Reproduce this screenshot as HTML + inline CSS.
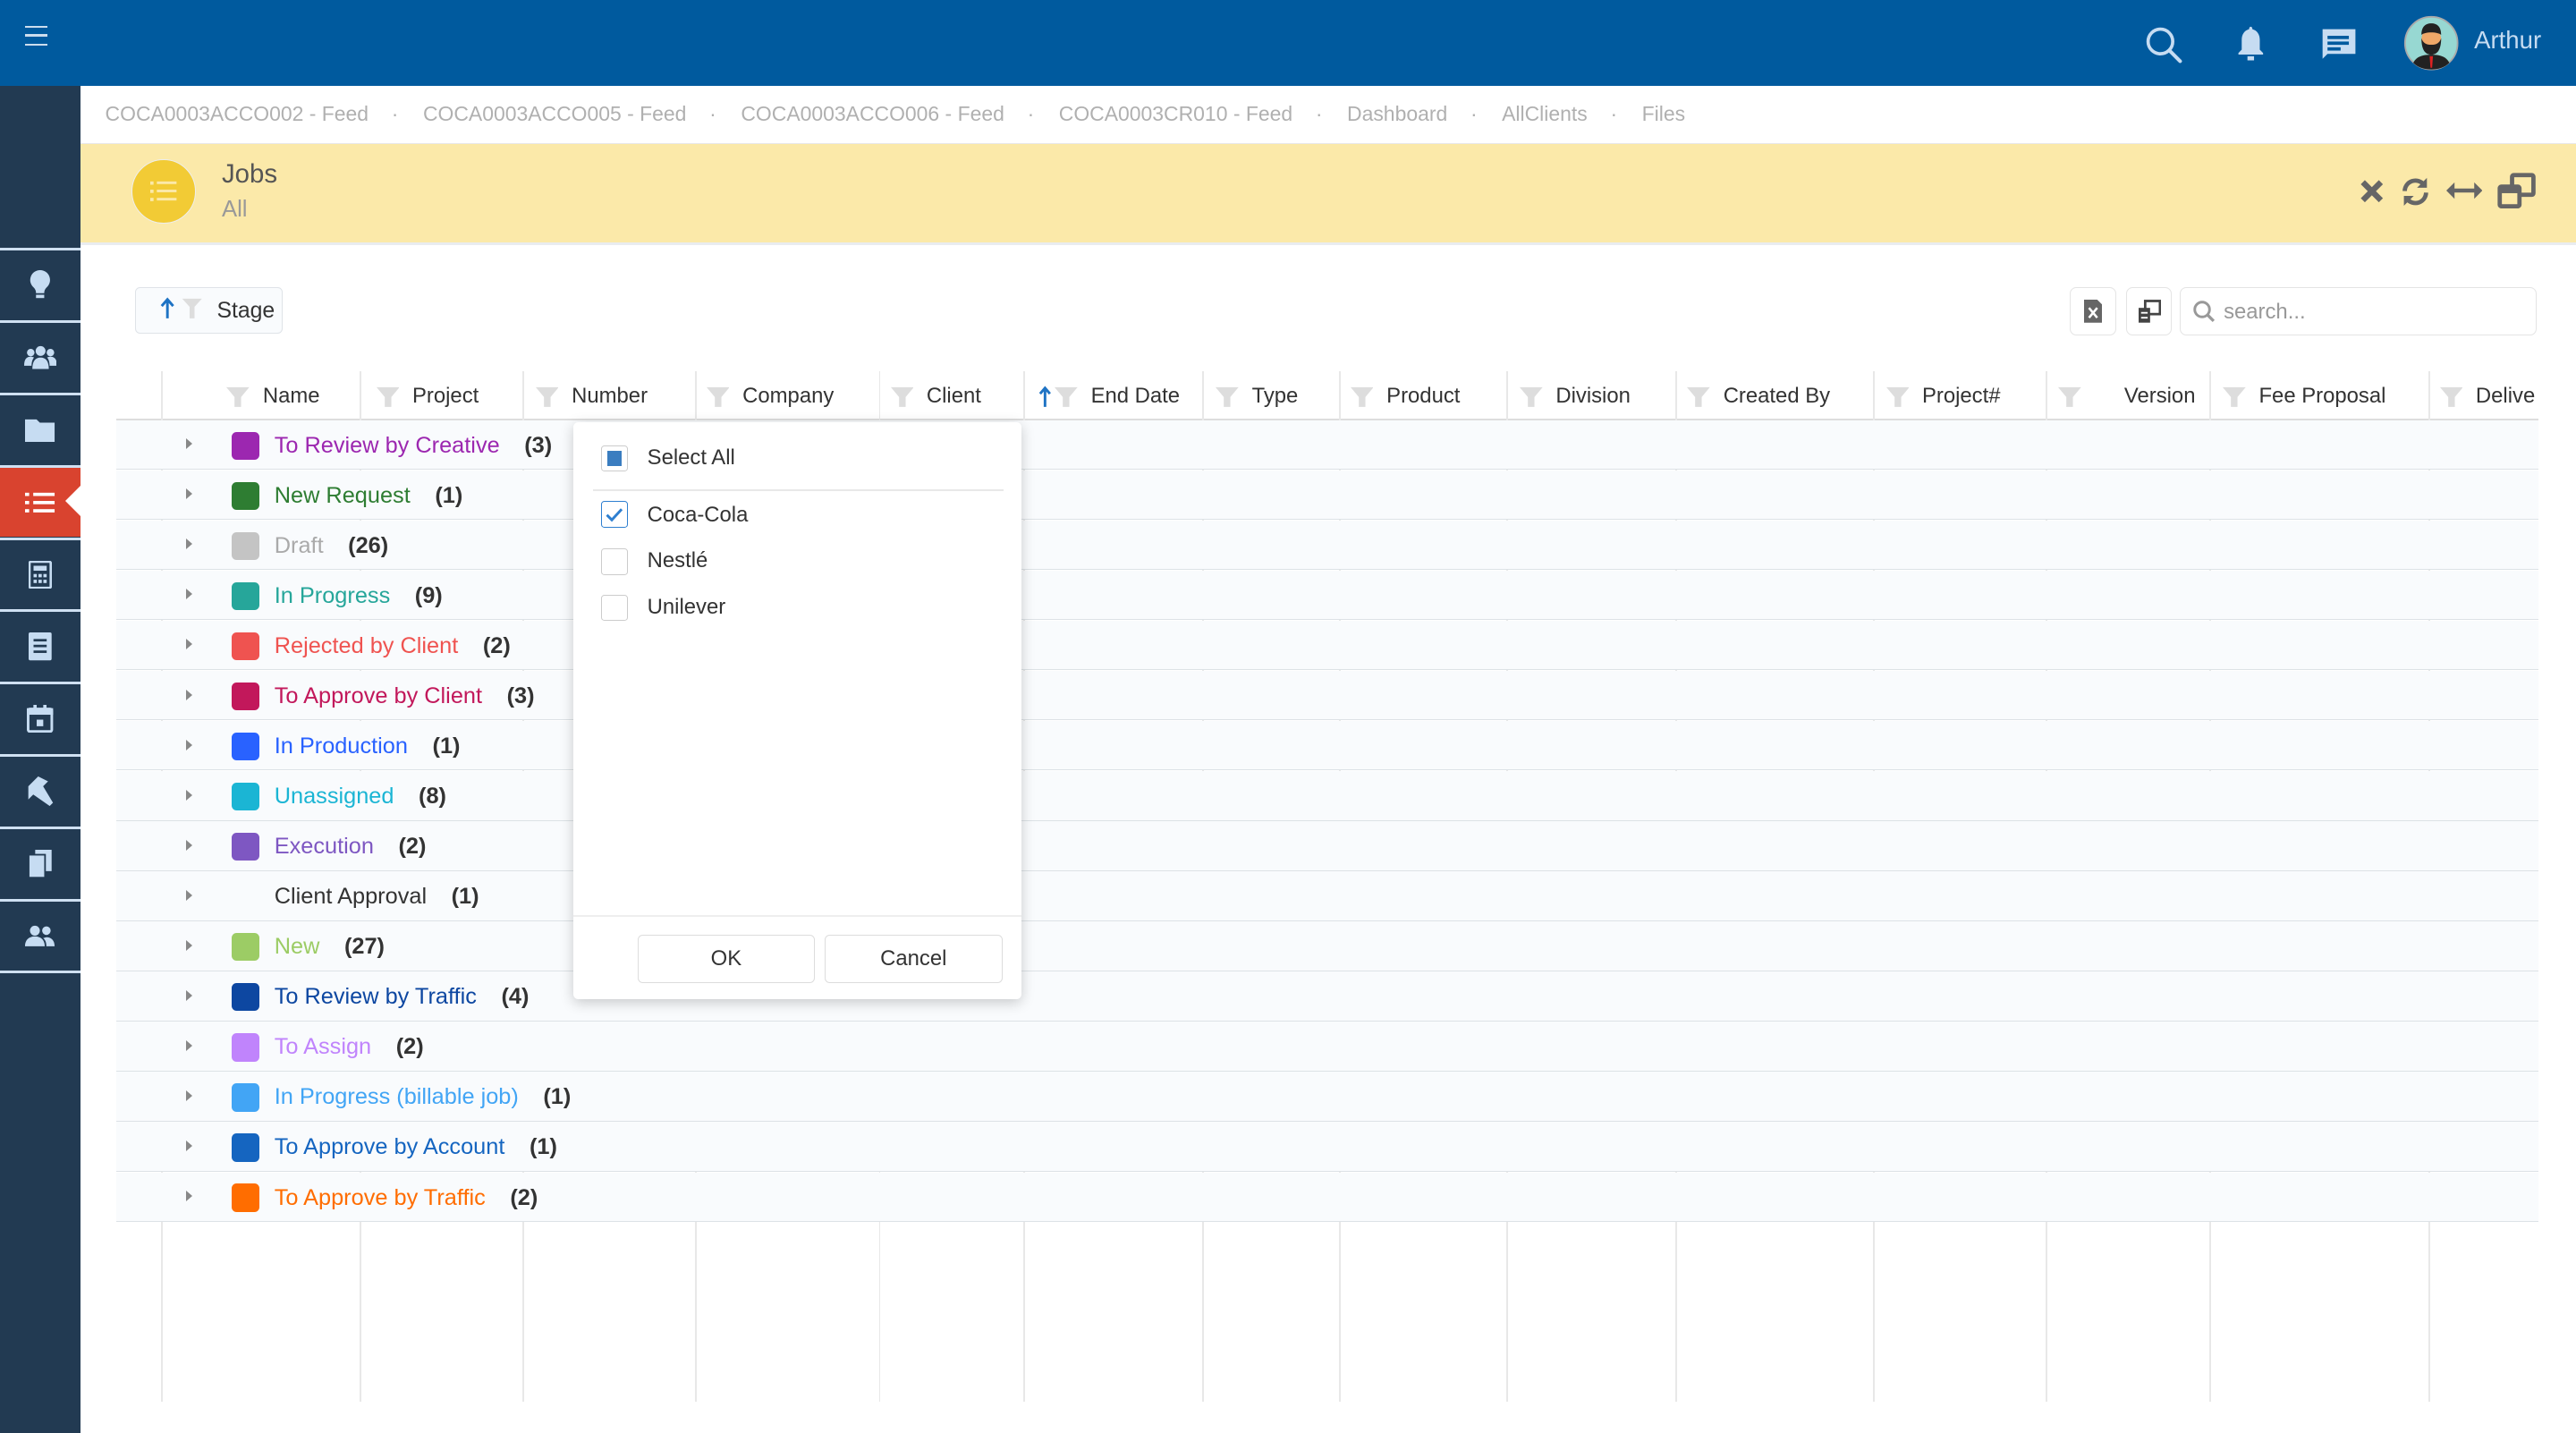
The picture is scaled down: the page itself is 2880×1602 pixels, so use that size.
<!DOCTYPE html>
<html><head><meta charset="utf-8"><style>
html,body{margin:0;padding:0;width:2880px;height:1602px;overflow:hidden;background:#fff}
#w{position:relative;width:1568px;height:872px;zoom:1.83673;font-family:"Liberation Sans",sans-serif;font-size:13px;color:#333;overflow:hidden}
.a{position:absolute}
.top{left:0;top:0;width:1568px;height:52px;background:#005a9e}
.side{left:0;top:52px;width:49px;height:820px;background:#223a52}
.si{position:absolute;left:0;width:49px;height:42px;border-top:2px solid #cfe0f2;display:flex;align-items:center;justify-content:center}
.bc{left:49px;top:52px;width:1519px;height:34px;color:#b0b0b0;font-size:12.5px;line-height:34px}
.bc span{margin:0 0 0 15px}.bc i{font-style:normal;margin-left:14px}
.yel{left:49px;top:87px;width:1519px;height:60px;background:#fbe9a9;border-top:1px solid #e8e8e8;border-bottom:2px solid #e9ecef}
.hd{top:226px;height:29px;font-size:13px;color:#333;line-height:30px}
.vl{top:226px;width:1px;height:627px;background:#e8e8e8}
.row{left:71px;width:1474px;height:29.5px;border-bottom:1px solid #dde2e6;background:#f9fbfd}
.row .c{position:absolute;left:70px;top:7px;width:17px;height:17px;border-radius:3px}
.row .t{position:absolute;left:96px;top:0;line-height:31px;font-size:13.8px;white-space:nowrap}
.row .t b{color:#333;margin-left:15px}
.row .ar{position:absolute;left:42px;top:11px;width:0;height:0;border-left:4px solid #888;border-top:3.5px solid transparent;border-bottom:3.5px solid transparent}
.fn{display:inline-block;vertical-align:middle;margin-right:8px}
.cb{position:absolute;left:366px;width:15px;height:15px;border:1px solid #ccc;border-radius:2px;background:#fff}
.pl{position:absolute;left:394px;font-size:13px}
.btn{position:absolute;top:569px;height:28px;border:1px solid #ddd;border-radius:3px;text-align:center;line-height:28px;background:#fff}
</style></head><body><div id="w">
<div class="a top"></div>
<div class="a" style="left:15px;top:16px;width:14px;height:12px;border-top:1.5px solid #cde;border-bottom:1.5px solid #cde;box-sizing:border-box"><div style="margin-top:3.5px;height:1.5px;background:#cde"></div></div>
<svg class="a" style="left:1305px;top:15px" width="24" height="24" viewBox="0 0 24 24"><circle cx="10" cy="10" r="7.5" fill="none" stroke="#c6dcf2" stroke-width="2"/><path d="M15.5 15.5L22 22" stroke="#c6dcf2" stroke-width="2.2" stroke-linecap="round"/></svg>
<svg class="a" style="left:1360px;top:15px" width="20" height="22" viewBox="0 0 20 22"><path d="M10 1c1 0 1 1.5 1 1.5c3 .8 4.5 3.3 4.5 6.5v6l2 2v1H2.5v-1l2-2V9c0-3.2 1.5-5.7 4.5-6.5C9 2.5 9 1 10 1z" fill="#c6dcf2"/><rect x="8" y="19" width="4" height="2.5" fill="#c6dcf2"/></svg>
<svg class="a" style="left:1412px;top:16px" width="23" height="22" viewBox="0 0 23 22"><path d="M1 2h21v15H5l-3 3V2z" fill="#c6dcf2"/><rect x="5" y="6" width="13" height="2" fill="#005a9e"/><rect x="5" y="9.5" width="13" height="2" fill="#005a9e"/><rect x="5" y="13" width="8" height="2" fill="#005a9e"/></svg>
<svg class="a" style="left:1463px;top:9px" width="34" height="34" viewBox="0 0 34 34"><circle cx="17" cy="17" r="16" fill="#97d8d2" stroke="#aaa" stroke-width="1"/><ellipse cx="17" cy="15" rx="6" ry="7.5" fill="#f0a868"/><path d="M11 14c0 8 3 10 6 10s6-2 6-10c-1 3-3 4-6 4s-5-1-6-4z" fill="#222"/><path d="M11 12c0-5 2.5-7 6-7s6 2 6 7c-2-2-10-2-12 0z" fill="#222"/><path d="M6 29c2-4 6-5 11-5s9 1 11 5c-3 3-7 4-11 4s-8-1-11-4z" fill="#222"/><path d="M16 25h2l-.5 7h-1z" fill="#d22"/></svg>
<div class="a" style="left:1506px;top:16px;color:#c6dcf2;font-size:15px">Arthur</div>

<div class="a side">
<div class="si" style="top:99px"><svg width="14" height="18" viewBox="0 0 14 18"><path d="M7 0a6 6 0 0 1 4 10.5c-1 1-1.5 2-1.5 3.5h-5c0-1.5-.5-2.5-1.5-3.5A6 6 0 0 1 7 0z" fill="#c6dcf2"/><rect x="4.5" y="15" width="5" height="2" fill="#c6dcf2"/></svg></div>
<div class="si" style="top:143px"><svg width="20" height="16" viewBox="0 0 20 16"><circle cx="10" cy="4" r="3" fill="#c6dcf2"/><circle cx="4" cy="5" r="2.3" fill="#c6dcf2"/><circle cx="16" cy="5" r="2.3" fill="#c6dcf2"/><path d="M5 15c0-5 2-7 5-7s5 2 5 7z" fill="#c6dcf2"/><path d="M0 13c0-4 1.5-5.5 4-5.5 1 0 2 .5 2 .5-1 1-1.5 3-1.5 5z M20 13c0-4-1.5-5.5-4-5.5-1 0-2 .5-2 .5 1 1 1.5 3 1.5 5z" fill="#c6dcf2"/></svg></div>
<div class="si" style="top:187px"><svg width="18" height="15" viewBox="0 0 18 15"><path d="M0 1h7l2 2h9v12H0z" fill="#c6dcf2"/></svg></div>
<div class="si" style="top:231px;background:#d9432f;border-top-color:#cfe0f2"><svg width="18" height="14" viewBox="0 0 18 14"><g fill="#fff"><rect x="0" y="1" width="2.5" height="2"/><rect x="5" y="1" width="13" height="2"/><rect x="0" y="6" width="2.5" height="2"/><rect x="5" y="6" width="13" height="2"/><rect x="0" y="11" width="2.5" height="2"/><rect x="5" y="11" width="13" height="2"/></g></svg></div>
<div class="a" style="left:40px;top:243px;width:0;height:0;border-right:10px solid #fff;border-top:10px solid transparent;border-bottom:10px solid transparent"></div>
<div class="si" style="top:275px"><svg width="14" height="17" viewBox="0 0 14 17"><rect x="0.5" y="0.5" width="13" height="16" rx="1" fill="none" stroke="#c6dcf2" stroke-width="1.5"/><rect x="3" y="3" width="8" height="3" fill="#c6dcf2"/><g fill="#c6dcf2"><rect x="3" y="8" width="2" height="2"/><rect x="6" y="8" width="2" height="2"/><rect x="9" y="8" width="2" height="2"/><rect x="3" y="11.5" width="2" height="2"/><rect x="6" y="11.5" width="2" height="2"/><rect x="9" y="11.5" width="2" height="2"/></g></svg></div>
<div class="si" style="top:319px"><svg width="14" height="17" viewBox="0 0 14 17"><rect x="0" y="0" width="14" height="17" rx="1" fill="#c6dcf2"/><g fill="#223a52"><rect x="3" y="4" width="8" height="1.5"/><rect x="3" y="7.5" width="8" height="1.5"/><rect x="3" y="11" width="8" height="1.5"/></g></svg></div>
<div class="si" style="top:363px"><svg width="16" height="17" viewBox="0 0 16 17"><rect x="0.8" y="2.5" width="14.4" height="13.7" rx="1" fill="none" stroke="#c6dcf2" stroke-width="1.6"/><rect x="0" y="2" width="16" height="4" fill="#c6dcf2"/><rect x="4" y="0" width="2" height="4" fill="#c6dcf2"/><rect x="10" y="0" width="2" height="4" fill="#c6dcf2"/><rect x="6" y="9" width="4" height="4" fill="#c6dcf2"/></svg></div>
<div class="si" style="top:407px"><svg width="18" height="18" viewBox="0 0 18 18"><path d="M2 6L8 0l6 3-3 3 6 10-2 2L5 11 2 14z" fill="#c6dcf2"/></svg></div>
<div class="si" style="top:451px"><svg width="14" height="17" viewBox="0 0 14 17"><rect x="4" y="0" width="10" height="13" fill="#c6dcf2"/><rect x="0" y="3" width="10" height="14" fill="#c6dcf2" stroke="#223a52"/></svg></div>
<div class="si" style="top:495px"><svg width="18" height="13" viewBox="0 0 18 13"><circle cx="6" cy="3.5" r="3" fill="#c6dcf2"/><circle cx="13" cy="3.5" r="2.6" fill="#c6dcf2"/><path d="M0 13c0-4 2.5-6 6-6s6 2 6 6z M13 7.5c3 0 5 2 5 5.5h-5c0-2-.5-4-2-5z" fill="#c6dcf2"/></svg></div>
<div class="si" style="top:539px;height:300px"></div>
</div>

<div class="a bc"><span>COCA0003ACCO002 - Feed</span><i>·</i><span>COCA0003ACCO005 - Feed</span><i>·</i><span>COCA0003ACCO006 - Feed</span><i>·</i><span>COCA0003CR010 - Feed</span><i>·</i><span>Dashboard</span><i>·</i><span>AllClients</span><i>·</i><span>Files</span></div>
<div class="a yel"></div>
<div class="a" style="left:80px;top:97px;width:38px;height:38px;border-radius:50%;background:#f2cb35;border:1px solid #eee"><svg style="position:absolute;left:11px;top:12px" width="16" height="14" viewBox="0 0 16 14"><g fill="#fbe9a9"><rect x="0" y="1" width="2" height="2"/><rect x="4" y="1" width="12" height="1.6"/><rect x="0" y="6" width="2" height="2"/><rect x="4" y="6" width="12" height="1.6"/><rect x="0" y="11" width="2" height="2"/><rect x="4" y="11" width="12" height="1.6"/></g></svg></div>
<div class="a" style="left:135px;top:97px;font-size:16px;color:#555">Jobs</div>
<div class="a" style="left:135px;top:120px;font-size:14px;color:#999">All</div>
<svg class="a" style="left:1436px;top:109px" width="15" height="15" viewBox="0 0 15 15"><path d="M2 2L13 13M13 2L2 13" stroke="#666" stroke-width="3.5"/></svg>
<svg class="a" style="left:1461px;top:107px" width="19" height="19" viewBox="0 0 19 19"><path d="M3 9a6.5 6.5 0 0 1 11.5-4" fill="none" stroke="#666" stroke-width="2.6"/><path d="M16.5 1v6h-6z" fill="#666"/><path d="M16 10a6.5 6.5 0 0 1-11.5 4" fill="none" stroke="#666" stroke-width="2.6"/><path d="M2.5 18v-6h6z" fill="#666"/></svg>
<svg class="a" style="left:1489px;top:110px" width="22" height="12" viewBox="0 0 22 12"><path d="M4 6h14" stroke="#666" stroke-width="2.5"/><path d="M0 6l5-5v10zM22 6l-5-5v10z" fill="#666"/></svg>
<svg class="a" style="left:1520px;top:105px" width="24" height="22" viewBox="0 0 24 22"><rect x="9" y="1.5" width="13" height="12" rx="1" fill="none" stroke="#666" stroke-width="2.6"/><rect x="1.5" y="8.5" width="12" height="12" rx="1" fill="#fbe9a9" stroke="#666" stroke-width="2.6"/><rect x="1.5" y="8.5" width="12" height="4" fill="#666"/></svg>

<div class="a" style="left:82px;top:175px;width:89px;height:27px;border:1px solid #dfe3e8;border-radius:3px;background:#f9fbfd"></div>
<svg class="a" style="left:97px;top:181px" width="28" height="14" viewBox="0 0 28 14"><path d="M5 13V2M1.5 5.5L5 1.5 8.5 5.5" stroke="#1e73c4" stroke-width="1.6" fill="none"/><path d="M14 1h12l-4.5 5v7h-3V6z" fill="#ddd"/></svg>
<div class="a" style="left:132px;top:182px;font-size:13.5px">Stage</div>

<div class="a" style="left:1260px;top:175px;width:27px;height:28px;border:1px solid #e4e4e4;border-radius:4px"><svg style="margin:7px 0 0 8px" width="11" height="14" viewBox="0 0 11 14"><path d="M0 0h8l3 3v11H0z" fill="#666"/><path d="M3 5l5 6M8 5l-5 6" stroke="#fff" stroke-width="1.4"/></svg></div>
<div class="a" style="left:1294px;top:175px;width:27px;height:28px;border:1px solid #e4e4e4;border-radius:4px"><svg style="margin:7px 0 0 7px" width="14" height="14" viewBox="0 0 14 14"><rect x="4" y="0.8" width="9" height="8" fill="none" stroke="#444" stroke-width="1.5"/><rect x="0" y="5" width="7" height="9" fill="#444"/><rect x="1.5" y="7.5" width="4" height="1" fill="#fff"/><rect x="1.5" y="10.5" width="4" height="1" fill="#fff"/></svg></div>
<div class="a" style="left:1327px;top:175px;width:216px;height:28px;border:1px solid #e4e4e4;border-radius:4px"><svg style="position:absolute;left:7px;top:7px" width="14" height="14" viewBox="0 0 14 14"><circle cx="6" cy="6" r="4.5" fill="none" stroke="#999" stroke-width="1.6"/><path d="M9.5 9.5L13 13" stroke="#999" stroke-width="1.8"/></svg><span style="position:absolute;left:26px;top:7px;color:#999;font-size:13px">search...</span></div>

<div class="a" style="left:71px;top:255px;width:1474px;height:1px;background:#ddd"></div>
<div class="a vl" style="left:98px"></div><div class="a vl" style="left:219px"></div><div class="a vl" style="left:318px"></div><div class="a vl" style="left:423px"></div><div class="a vl" style="left:535px"></div><div class="a vl" style="left:623px"></div><div class="a vl" style="left:732px"></div><div class="a vl" style="left:815px"></div><div class="a vl" style="left:917px"></div><div class="a vl" style="left:1020px"></div><div class="a vl" style="left:1140px"></div><div class="a vl" style="left:1245px"></div><div class="a vl" style="left:1345px"></div><div class="a vl" style="left:1478px"></div>

<svg width="0" height="0" style="position:absolute"><defs><path id="f" d="M0 1h14l-5 6v6h-4V7z" fill="#ddd"/></defs></svg>
<div class="a hd" style="left:138px"><svg class="fn" width="14" height="14"><use href="#f"/></svg>Name</div>
<div class="a hd" style="left:229px"><svg class="fn" width="14" height="14"><use href="#f"/></svg>Project</div>
<div class="a hd" style="left:326px"><svg class="fn" width="14" height="14"><use href="#f"/></svg>Number</div>
<div class="a hd" style="left:430px"><svg class="fn" width="14" height="14"><use href="#f"/></svg>Company</div>
<div class="a hd" style="left:542px"><svg class="fn" width="14" height="14"><use href="#f"/></svg>Client</div>
<div class="a hd" style="left:632px"><svg style="vertical-align:middle;margin-right:2px" width="8" height="14" viewBox="0 0 8 14"><path d="M4 13V2M1 5L4 1.5 7 5" stroke="#1e73c4" stroke-width="1.6" fill="none"/></svg><svg class="fn" width="14" height="14"><use href="#f"/></svg>End Date</div>
<div class="a hd" style="left:740px"><svg class="fn" width="14" height="14"><use href="#f"/></svg>Type</div>
<div class="a hd" style="left:822px"><svg class="fn" width="14" height="14"><use href="#f"/></svg>Product</div>
<div class="a hd" style="left:925px"><svg class="fn" width="14" height="14"><use href="#f"/></svg>Division</div>
<div class="a hd" style="left:1027px"><svg class="fn" width="14" height="14"><use href="#f"/></svg>Created By</div>
<div class="a hd" style="left:1148px"><svg class="fn" width="14" height="14"><use href="#f"/></svg>Project#</div>
<div class="a hd" style="left:1253px"><svg class="fn" width="14" height="14"><use href="#f"/></svg></div>
<div class="a hd" style="left:1293px">Version</div>
<div class="a hd" style="left:1353px"><svg class="fn" width="14" height="14"><use href="#f"/></svg>Fee Proposal</div>
<div class="a hd" style="left:1485px;white-space:nowrap"><svg class="fn" width="14" height="14"><use href="#f"/></svg>Delive</div>

<div class="a row" style="top:256px"><div class="ar"></div><div class="c" style="background:#9c27b0"></div><div class="t" style="color:#9c27b0">To Review by Creative<b>(3)</b></div></div>
<div class="a row" style="top:286.5px"><div class="ar"></div><div class="c" style="background:#2e7d32"></div><div class="t" style="color:#2e7d32">New Request<b>(1)</b></div></div>
<div class="a row" style="top:317px"><div class="ar"></div><div class="c" style="background:#c4c4c4"></div><div class="t" style="color:#aaa">Draft<b>(26)</b></div></div>
<div class="a row" style="top:347.5px"><div class="ar"></div><div class="c" style="background:#26a69a"></div><div class="t" style="color:#26a69a">In Progress<b>(9)</b></div></div>
<div class="a row" style="top:378px"><div class="ar"></div><div class="c" style="background:#ef5350"></div><div class="t" style="color:#ef5350">Rejected by Client<b>(2)</b></div></div>
<div class="a row" style="top:408.5px"><div class="ar"></div><div class="c" style="background:#c2185b"></div><div class="t" style="color:#c2185b">To Approve by Client<b>(3)</b></div></div>
<div class="a row" style="top:439px"><div class="ar"></div><div class="c" style="background:#2962ff"></div><div class="t" style="color:#2962ff">In Production<b>(1)</b></div></div>
<div class="a row" style="top:469.5px"><div class="ar"></div><div class="c" style="background:#1bb5d4"></div><div class="t" style="color:#1bb5d4">Unassigned<b>(8)</b></div></div>
<div class="a row" style="top:500px"><div class="ar"></div><div class="c" style="background:#7e57c2"></div><div class="t" style="color:#7e57c2">Execution<b>(2)</b></div></div>
<div class="a row" style="top:530.5px"><div class="ar"></div><div class="t" style="color:#333">Client Approval<b>(1)</b></div></div>
<div class="a row" style="top:561px"><div class="ar"></div><div class="c" style="background:#9ccc65"></div><div class="t" style="color:#9ccc65">New<b>(27)</b></div></div>
<div class="a row" style="top:591.5px"><div class="ar"></div><div class="c" style="background:#0d47a1"></div><div class="t" style="color:#0d47a1">To Review by Traffic<b>(4)</b></div></div>
<div class="a row" style="top:622px"><div class="ar"></div><div class="c" style="background:#c084fc"></div><div class="t" style="color:#c084fc">To Assign<b>(2)</b></div></div>
<div class="a row" style="top:652.5px"><div class="ar"></div><div class="c" style="background:#42a5f5"></div><div class="t" style="color:#42a5f5">In Progress (billable job)<b>(1)</b></div></div>
<div class="a row" style="top:683px"><div class="ar"></div><div class="c" style="background:#1565c0"></div><div class="t" style="color:#1565c0">To Approve by Account<b>(1)</b></div></div>
<div class="a row" style="top:713.5px"><div class="ar"></div><div class="c" style="background:#ff6d00"></div><div class="t" style="color:#ff6d00">To Approve by Traffic<b>(2)</b></div></div>

<div class="a" style="left:349px;top:257px;width:273px;height:351px;background:#fff;border-radius:3px;box-shadow:0 2px 8px rgba(0,0,0,.2)"></div>
<div class="cb" style="top:271px"><div style="margin:3px;width:9px;height:9px;background:#3a7dc0"></div></div><div class="pl" style="top:271px">Select All</div>
<div class="a" style="left:361px;top:298px;width:250px;height:1px;background:#e8e8e8"></div>
<div class="cb" style="top:305px;border-color:#2e7fd0"><svg width="15" height="15" viewBox="0 0 15 15"><path d="M3 8l3 3 6-6.5" stroke="#2e7fd0" stroke-width="1.6" fill="none"/></svg></div><div class="pl" style="top:306px">Coca-Cola</div>
<div class="cb" style="top:334px"></div><div class="pl" style="top:334px">Nestlé</div>
<div class="cb" style="top:362px"></div><div class="pl" style="top:362px">Unilever</div>
<div class="a" style="left:349px;top:557px;width:273px;height:1px;background:#eee"></div>
<div class="btn" style="left:388px;width:107px">OK</div>
<div class="btn" style="left:502px;width:107px">Cancel</div>
</div></body></html>
